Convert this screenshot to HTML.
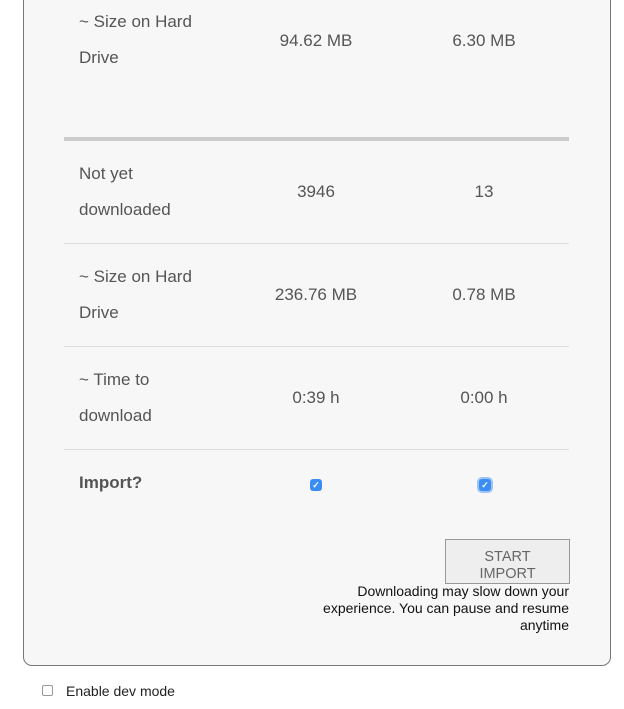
<!DOCTYPE html>
<html><head><style>
body{margin:0;width:624px;height:709px;background:#fff;font-family:"Liberation Sans",sans-serif;position:relative;overflow:hidden}
.panel{position:absolute;left:23px;top:-10px;width:586px;height:675px;background:#f7f7f7;border:1px solid #777;border-top:none;border-radius:0 0 9px 9px}
.t{position:absolute;color:#555;font-size:17px;line-height:36px}
.c{position:absolute;color:#555;font-size:17px;text-align:center;width:160px}
.hr{position:absolute;left:64px;width:505px;height:1px;background:#ddd}
.cb{position:absolute;width:12px;height:12px;background:#3b8cf5;border-radius:3px;color:#fff;font-size:9px;line-height:12px;text-align:center;font-weight:bold}
</style></head><body>
<div class="panel"></div>
<div class="t" style="left:79px;top:4px">~ Size on Hard<br>Drive</div>
<div class="c" style="left:236px;top:31px">94.62 MB</div>
<div class="c" style="left:404px;top:31px">6.30 MB</div>
<div style="position:absolute;left:64px;top:137px;width:505px;height:4px;background:#ccc"></div>
<div class="t" style="left:79px;top:156px">Not yet<br>downloaded</div>
<div class="c" style="left:236px;top:182px">3946</div>
<div class="c" style="left:404px;top:182px">13</div>
<div class="hr" style="top:243px"></div>
<div class="t" style="left:79px;top:259px">~ Size on Hard<br>Drive</div>
<div class="c" style="left:236px;top:285px">236.76 MB</div>
<div class="c" style="left:404px;top:285px">0.78 MB</div>
<div class="hr" style="top:346px"></div>
<div class="t" style="left:79px;top:362px">~ Time to<br>download</div>
<div class="c" style="left:236px;top:388px">0:39 h</div>
<div class="c" style="left:404px;top:388px">0:00 h</div>
<div class="hr" style="top:449px"></div>
<div class="t" style="left:79px;top:465px;font-weight:bold;color:#555">Import?</div>
<div class="cb" style="left:310px;top:479px">✓</div>
<div class="cb" style="left:479px;top:479px;box-shadow:0 0 0 2px #9cc4f7">✓</div>
<div style="position:absolute;left:445px;top:539px;width:123px;height:43px;border:1px solid #999;background:#eee;color:#666;font-size:14.5px;line-height:17px;text-align:center"><div style="margin-top:9px">START<br>IMPORT</div></div>
<div style="position:absolute;right:55px;top:583px;width:300px;text-align:right;font-size:14px;line-height:17px;color:#111">Downloading may slow down your<br>experience. You can pause and resume<br>anytime</div>
<div style="position:absolute;left:42px;top:685px;width:9px;height:9px;border:1px solid #999;border-radius:2px;background:#fff"></div>
<div style="position:absolute;left:66px;top:683px;font-size:14px;color:#222">Enable dev mode</div>
</body></html>
